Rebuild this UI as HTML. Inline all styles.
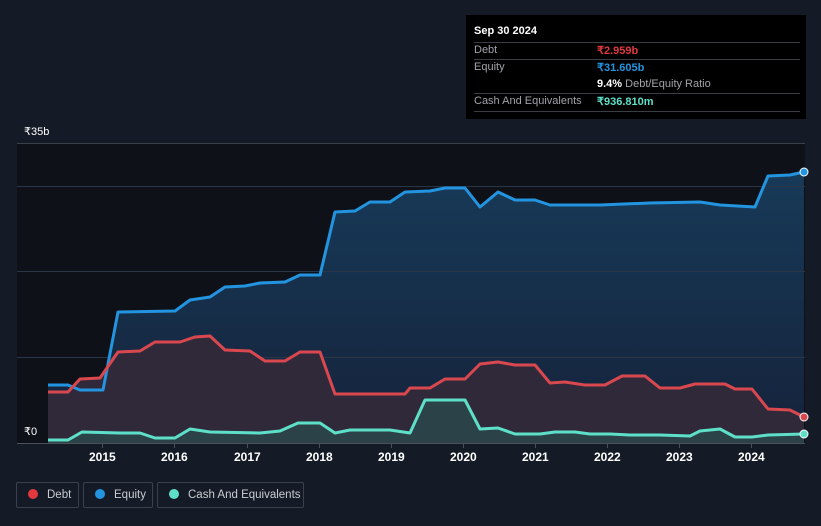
<!DOCTYPE html>
<html><head><meta charset="utf-8"><style>
html,body{margin:0;width:821px;height:526px;overflow:hidden}
body{background:#151b26;font-family:"Liberation Sans",sans-serif;position:relative}
.tt{position:absolute;left:466px;top:15px;width:340px;height:104px;background:#000;color:#fff;font-size:11px}
.tt .r{position:absolute;left:8px;right:6px;border-top:1px solid #3a3d44}
.lab{position:absolute;left:8px;color:#a0a3a8}
.val{position:absolute;left:131px;font-weight:bold}
.leg{position:absolute;top:482px;height:26px;border:1px solid #3b414c;border-radius:2px;color:#c8ccd2;font-size:11.5px;line-height:25px;box-sizing:border-box;white-space:nowrap}
.leg i{display:inline-block;width:10px;height:10px;border-radius:50%;margin:0 9px 0 11px;vertical-align:-1px}
.ax{position:absolute;top:450px;color:#fff;font-size:12px;font-weight:bold}
</style></head><body>
<svg width="821" height="526" style="position:absolute;left:0;top:0">
<defs>
<linearGradient id="eg" x1="0" y1="0" x2="0" y2="1"><stop offset="0" stop-color="#173a58"/><stop offset="1" stop-color="#15223a"/></linearGradient>
</defs>
<rect x="17" y="143" width="788" height="300" fill="#0e1118"/>
<line x1="17" y1="143.5" x2="805" y2="143.5" stroke="#3a3f48"/>
<polygon fill="url(#eg)" points="48,443 48,385 68,385 80,390 103,390 118,312 175,311 190,300 210,297 225,287 245,286 260,283 285,282 300,275 320,275 335,212 355,211 370,202 390,202 405,192 430,191 445,188 465,188 480,207 498,192 515,200 535,200 550,205 600,205 650,203 700,202 720,205 755,207 768,176 790,175 804,172 804,443"/>
<g stroke="#2a3646" stroke-width="1"><line x1="17" y1="186.5" x2="805" y2="186.5"/><line x1="17" y1="271.5" x2="805" y2="271.5"/><line x1="17" y1="357.5" x2="805" y2="357.5"/></g>
<polygon fill="#30293a" points="48,443 48,392 68,392 80,379 100,378 118,352 140,351 155,342 180,342 195,337 210,336 225,350 250,351 265,361 285,361 300,352 320,352 335,394 405,394 410,388 430,388 445,379 465,379 480,364 498,362 515,365 535,365 550,383 565,382 585,385 605,385 622,376 645,376 660,388 680,388 695,384 725,384 735,389 752,389 768,409 790,410 804,417 804,443"/>
<polygon fill="#2c4249" points="48,443 48,440 68,440 82,432 120,433 140,433 155,438 175,438 190,429 210,432 260,433 280,431 298,423 320,423 335,433 350,430 390,430 410,433 425,400 465,400 480,429 498,428 515,434 540,434 555,432 575,432 590,434 610,434 630,435 660,435 690,436 700,431 720,429 735,437 752,437 768,435 804,434 804,443"/>
<g fill="none" stroke-width="3" stroke-linejoin="round">
<polyline stroke="#2394e0" points="48,385 68,385 80,390 103,390 118,312 175,311 190,300 210,297 225,287 245,286 260,283 285,282 300,275 320,275 335,212 355,211 370,202 390,202 405,192 430,191 445,188 465,188 480,207 498,192 515,200 535,200 550,205 600,205 650,203 700,202 720,205 755,207 768,176 790,175 804,172"/>
<polyline stroke="#d9474f" points="48,392 68,392 80,379 100,378 118,352 140,351 155,342 180,342 195,337 210,336 225,350 250,351 265,361 285,361 300,352 320,352 335,394 405,394 410,388 430,388 445,379 465,379 480,364 498,362 515,365 535,365 550,383 565,382 585,385 605,385 622,376 645,376 660,388 680,388 695,384 725,384 735,389 752,389 768,409 790,410 804,417"/>
<polyline stroke="#5ee0c8" points="48,440 68,440 82,432 120,433 140,433 155,438 175,438 190,429 210,432 260,433 280,431 298,423 320,423 335,433 350,430 390,430 410,433 425,400 465,400 480,429 498,428 515,434 540,434 555,432 575,432 590,434 610,434 630,435 660,435 690,436 700,431 720,429 735,437 752,437 768,435 804,434"/>
</g>
<line x1="17" y1="443.5" x2="805" y2="443.5" stroke="#4a505a"/>
<g stroke="#4a505a"><line x1="102.5" y1="443" x2="102.5" y2="448"/><line x1="174.5" y1="443" x2="174.5" y2="448"/><line x1="247.5" y1="443" x2="247.5" y2="448"/><line x1="319.5" y1="443" x2="319.5" y2="448"/><line x1="391.5" y1="443" x2="391.5" y2="448"/><line x1="463.5" y1="443" x2="463.5" y2="448"/><line x1="535.5" y1="443" x2="535.5" y2="448"/><line x1="607.5" y1="443" x2="607.5" y2="448"/><line x1="679.5" y1="443" x2="679.5" y2="448"/><line x1="751.5" y1="443" x2="751.5" y2="448"/></g>
<circle cx="804" cy="172" r="4" fill="#2394e0" stroke="#fff" stroke-width="1"/>
<circle cx="804" cy="417" r="4" fill="#d9474f" stroke="#fff" stroke-width="1"/>
<circle cx="804" cy="434" r="4" fill="#5ee0c8" stroke="#fff" stroke-width="1"/>
</svg>
<div style="position:absolute;left:24px;top:125px;color:#fff;font-size:11px">₹35b</div>
<div style="position:absolute;left:24px;top:425px;color:#fff;font-size:11px">₹0</div>
<div class="ax" style="left:89px">2015</div><div class="ax" style="left:161px">2016</div><div class="ax" style="left:234px">2017</div><div class="ax" style="left:306px">2018</div><div class="ax" style="left:378px">2019</div><div class="ax" style="left:450px">2020</div><div class="ax" style="left:522px">2021</div><div class="ax" style="left:594px">2022</div><div class="ax" style="left:666px">2023</div><div class="ax" style="left:738px">2024</div>
<div class="tt">
<div style="position:absolute;left:8px;top:10px;font-weight:bold">Sep 30 2024</div>
<div class="r" style="top:27px"></div>
<div class="lab" style="top:29px">Debt</div><div class="val" style="top:29px;color:#e0393e">₹2.959b</div>
<div class="r" style="top:44px"></div>
<div class="lab" style="top:46px">Equity</div><div class="val" style="top:46px;color:#2394e0">₹31.605b</div>
<div class="val" style="top:63px">9.4% <span style="color:#a0a3a8;font-weight:normal">Debt/Equity Ratio</span></div>
<div class="r" style="top:78px"></div>
<div class="lab" style="top:80px">Cash And Equivalents</div><div class="val" style="top:80px;color:#5ee0c8">₹936.810m</div>
<div class="r" style="top:96px"></div>
</div>
<div class="leg" style="left:16px;width:63px"><i style="background:#e0393e"></i>Debt</div>
<div class="leg" style="left:83px;width:70px"><i style="background:#2394e0"></i>Equity</div>
<div class="leg" style="left:157px;width:147px"><i style="background:#5ee0c8"></i>Cash And Equivalents</div>
</body></html>
